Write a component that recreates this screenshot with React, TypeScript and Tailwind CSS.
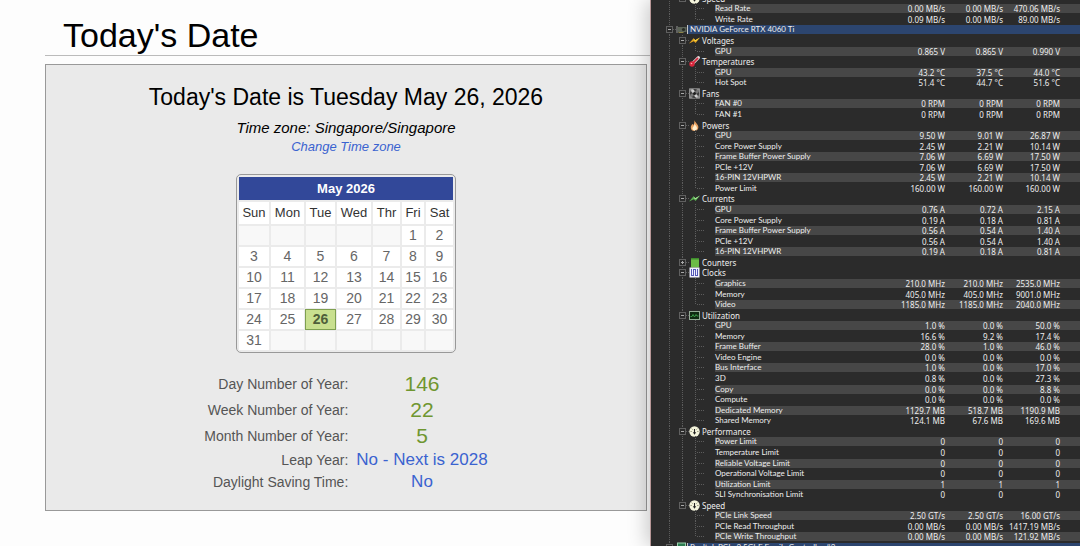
import type { ReactNode } from "react";

type Sensor = [name: string, current: string, min: string, max: string];

type Group = {
  name: string;
  icon: ReactNode;
  collapsed?: boolean;
  last?: boolean;
  sensors: Sensor[];
};

const icon = "block h-[11px] w-[11px]";

const Bolt = ({ color, shade }: { color: string; shade: string }) => (
  <svg viewBox="0 0 11 11" className={icon}>
    <path d="M0 8.6 4.6 3.2 6.2 5.2 11 2.6 6.6 8 4.8 6.2Z" fill={color} />
    <path d="M4.6 3.2 6.2 5.2 11 2.6 6.9 6.2 5.4 5.8Z" fill={shade} />
  </svg>
);

const Thermometer = () => (
  <svg viewBox="0 0 11 11" className={icon}>
    <path d="M3.4 7.6 9.4 1.6" stroke="#e8dcdc" strokeWidth="3" strokeLinecap="round" />
    <path d="M3.4 7.6 8.6 2.4" stroke="#d2283c" strokeWidth="1.7" strokeLinecap="round" />
    <circle cx="3" cy="8" r="2.7" fill="#d8263c" />
    <circle cx="2.5" cy="7.5" r="0.8" fill="#f6a9b0" />
  </svg>
);

const Fan = () => (
  <svg viewBox="0 0 11 11" className={icon}>
    <rect width="11" height="10.5" y="0.2" rx="0.6" fill="#8e8e8e" />
    <circle cx="5.5" cy="5.5" r="4.6" fill="#3c3c3c" />
    <path d="M5.5 5.5C3 5 1.2 3 2.6 1.4 5 .8 6.2 3 5.5 5.5ZM5.5 5.5C8 6 9.8 8 8.4 9.6 6 10.2 4.8 8 5.5 5.5Z" fill="#cfcfcf" />
    <path d="M5.5 5.5C6 3 8 1.2 9.6 2.6 10.2 5 8 6.2 5.5 5.5ZM5.5 5.5C5 8 3 9.8 1.4 8.4.8 6 3 4.8 5.5 5.5Z" fill="#777" />
    <circle cx="5.5" cy="5.5" r="1.5" fill="#1c1c1c" />
  </svg>
);

const Flame = () => (
  <svg viewBox="0 0 11 11" className={icon}>
    <path d="M5.2 0C5.6 2 9.4 4.2 9.4 7.2 9.4 9.6 7.6 11 5.5 11S1.8 9.6 1.8 7.4C1.8 5.8 2.8 5.2 3.2 4 4 4.4 4.2 4.8 4.2 5.2 5.2 4 5.6 2 5.2 0Z" fill="#e8a060" />
    <path d="M5.6 3.4C6 5 8 6.2 8 8 8 9.6 6.9 10.4 5.6 10.4S3.4 9.6 3.4 8.2C3.4 7 5.6 6 5.6 3.4Z" fill="#fff0d0" />
  </svg>
);

const Counter = () => (
  <svg viewBox="0 0 11 11" className={icon}>
    <rect x="2" y="1" width="8" height="9.5" fill="#6cbc48" />
    <path d="M2 1h8v1.5H2Z" fill="#3e8c2c" />
  </svg>
);

const Clock = () => (
  <svg viewBox="0 0 11 11" className={icon}>
    <rect x="0.5" y="0.5" width="10" height="10" fill="#f2f2ff" />
    <path d="M2.5 2v7M4.5 2v7M6.5 2v7M8.5 2v7" stroke="#5458b8" strokeWidth="1" />
    <path d="M4.5 2.5h2M2.500 8.500h2M6.500 8.500h2" stroke="#5458b8" strokeWidth="1" />
  </svg>
);

const Graph = () => (
  <svg viewBox="0 0 11 11" className={icon}>
    <rect x="0.5" y="1.5" width="10" height="8" fill="#0e2a12" stroke="#93ab96" />
    <path d="M1.5 6.5h1.5l1-2 1.5 2.5 1.5-2.5 1 1.5h1.5" fill="none" stroke="#3da44c" strokeWidth="0.9" />
  </svg>
);

const Gauge = () => (
  <svg viewBox="0 0 11 11" className={icon}>
    <circle cx="5.5" cy="5.5" r="5.2" fill="#f4f4dc" />
    <path d="M5.5 3v4" stroke="#222" strokeWidth="1.1" />
    <path d="M3.8 6.2h3.4L5.5 8.8Z" fill="#222" />
    <path d="M1.5 5.5h1.3M8.2 5.5h1.3M2.7 2.7l.9.9M8.3 2.7l-.9.9" stroke="#77775c" strokeWidth="0.8" />
  </svg>
);

const Card = () => (
  <svg viewBox="0 0 11 11" className={icon}>
    <path d="M1 2v7" stroke="#9a9a9a" />
    <rect x="1.5" y="3" width="9" height="5" fill="#5c6458" />
    <circle cx="7.5" cy="5.5" r="1.6" fill="#262a24" />
    <path d="M2.5 8.5h5" stroke="#8c8448" />
  </svg>
);

const Network = () => (
  <svg viewBox="0 0 11 11" className={icon}>
    <rect x="1.5" y="1" width="8" height="6" fill="#2c7c50" stroke="#9ccfae" />
    <path d="M3 9.5h5" stroke="#9ccfae" />
  </svg>
);

const groups: Group[] = [
  {
    name: "Voltages",
    icon: <Bolt color="#e0a020" shade="#ffe040" />,
    sensors: [["GPU", "0.865 V", "0.865 V", "0.990 V"]],
  },
  {
    name: "Temperatures",
    icon: <Thermometer />,
    sensors: [
      ["GPU", "43.2 °C", "37.5 °C", "44.0 °C"],
      ["Hot Spot", "51.4 °C", "44.7 °C", "51.6 °C"],
    ],
  },
  {
    name: "Fans",
    icon: <Fan />,
    sensors: [
      ["FAN #0", "0 RPM", "0 RPM", "0 RPM"],
      ["FAN #1", "0 RPM", "0 RPM", "0 RPM"],
    ],
  },
  {
    name: "Powers",
    icon: <Flame />,
    sensors: [
      ["GPU", "9.50 W", "9.01 W", "26.87 W"],
      ["Core Power Supply", "2.45 W", "2.21 W", "10.14 W"],
      ["Frame Buffer Power Supply", "7.06 W", "6.69 W", "17.50 W"],
      ["PCIe +12V", "7.06 W", "6.69 W", "17.50 W"],
      ["16-PIN 12VHPWR", "2.45 W", "2.21 W", "10.14 W"],
      ["Power Limit", "160.00 W", "160.00 W", "160.00 W"],
    ],
  },
  {
    name: "Currents",
    icon: <Bolt color="#58b050" shade="#b0e8a0" />,
    sensors: [
      ["GPU", "0.76 A", "0.72 A", "2.15 A"],
      ["Core Power Supply", "0.19 A", "0.18 A", "0.81 A"],
      ["Frame Buffer Power Supply", "0.56 A", "0.54 A", "1.40 A"],
      ["PCIe +12V", "0.56 A", "0.54 A", "1.40 A"],
      ["16-PIN 12VHPWR", "0.19 A", "0.18 A", "0.81 A"],
    ],
  },
  { name: "Counters", icon: <Counter />, collapsed: true, sensors: [] },
  {
    name: "Clocks",
    icon: <Clock />,
    sensors: [
      ["Graphics", "210.0 MHz", "210.0 MHz", "2535.0 MHz"],
      ["Memory", "405.0 MHz", "405.0 MHz", "9001.0 MHz"],
      ["Video", "1185.0 MHz", "1185.0 MHz", "2040.0 MHz"],
    ],
  },
  {
    name: "Utilization",
    icon: <Graph />,
    sensors: [
      ["GPU", "1.0 %", "0.0 %", "50.0 %"],
      ["Memory", "16.6 %", "9.2 %", "17.4 %"],
      ["Frame Buffer", "28.0 %", "1.0 %", "46.0 %"],
      ["Video Engine", "0.0 %", "0.0 %", "0.0 %"],
      ["Bus Interface", "1.0 %", "0.0 %", "17.0 %"],
      ["3D", "0.8 %", "0.0 %", "27.3 %"],
      ["Copy", "0.0 %", "0.0 %", "8.8 %"],
      ["Compute", "0.0 %", "0.0 %", "0.0 %"],
      ["Dedicated Memory", "1129.7 MB", "518.7 MB", "1190.9 MB"],
      ["Shared Memory", "124.1 MB", "67.6 MB", "169.6 MB"],
    ],
  },
  {
    name: "Performance",
    icon: <Gauge />,
    sensors: [
      ["Power Limit", "0", "0", "0"],
      ["Temperature Limit", "0", "0", "0"],
      ["Reliable Voltage Limit", "0", "0", "0"],
      ["Operational Voltage Limit", "0", "0", "0"],
      ["Utilization Limit", "1", "1", "1"],
      ["SLI Synchronisation Limit", "0", "0", "0"],
    ],
  },
  {
    name: "Speed",
    icon: <Gauge />,
    last: true,
    sensors: [
      ["PCIe Link Speed", "2.50 GT/s", "2.50 GT/s", "16.00 GT/s"],
      ["PCIe Read Throughput", "0.00 MB/s", "0.00 MB/s", "1417.19 MB/s"],
      ["PCIe Write Throughput", "0.00 MB/s", "0.00 MB/s", "121.92 MB/s"],
    ],
  },
];

const driveSpeed: Group = {
  name: "Speed",
  icon: <Gauge />,
  last: true,
  sensors: [
    ["Read Rate", "0.00 MB/s", "0.00 MB/s", "470.06 MB/s"],
    ["Write Rate", "0.09 MB/s", "0.00 MB/s", "89.00 MB/s"],
  ],
};

// One 13px step of the tree: a dotted line down, optionally with an expander box
function Guide({ line = "none", box }: { line?: "full" | "half" | "none"; box?: "+" | "-" }) {
  return (
    <svg viewBox="0 0 13 11" className="block h-[11px] w-[13px] shrink-0" shapeRendering="crispEdges">
      {line !== "none" && (
        <path
          d={line === "full" ? "M6.5 0v11" : "M6.5 0v6"}
          stroke="#5c5c5c"
          strokeDasharray="1 1"
        />
      )}
      {box && (
        <>
          <path d="M10 5.5h3" stroke="#5c5c5c" strokeDasharray="1 1" />
          <rect x="3.5" y="2.5" width="6" height="6" fill="#2b2b2b" stroke="#606060" />
          <path d={box === "+" ? "M5 5.5h3M6.5 4v3" : "M5 5.5h3"} stroke="#a8a8a8" />
        </>
      )}
    </svg>
  );
}

function Branch({ last }: { last: boolean }) {
  return (
    <svg viewBox="0 0 26 11" className="block h-[11px] w-[26px] shrink-0" shapeRendering="crispEdges">
      <path d={last ? "M6.5 0v6" : "M6.5 0v11"} stroke="#5c5c5c" strokeDasharray="1 1" />
      <path d="M8 5.5h7" stroke="#5c5c5c" strokeDasharray="1 1" />
    </svg>
  );
}

function SensorGroup({ group }: { group: Group }) {
  return (
    <>
      <tr>
        <th scope="rowgroup" colSpan={4} className="p-0 text-left font-normal">
          <div className="flex h-[9px] items-center pl-3">
            <Guide line="full" />
            <Guide line={group.last ? "half" : "full"} box={group.collapsed ? "+" : "-"} />
            {group.icon}
            <span className="pl-[2px]">{group.name}</span>
          </div>
        </th>
      </tr>
      {group.sensors.map(([name, ...values], i) => {
        const bg = i % 2 === 0 ? "bg-[#474747]" : "";
        return (
          <tr key={name}>
            <th scope="row" className="p-0 text-left font-normal">
              <div className="flex h-[9px] items-center pl-3">
                <Guide line="full" />
                <Guide line={group.last ? "none" : "full"} />
                <Branch last={i === group.sensors.length - 1} />
                <span className={`h-[9px] flex-1 font-[Lato,sans-serif] whitespace-nowrap ${bg}`}>
                  {name}
                </span>
              </div>
            </th>
            {values.map((value, col) => (
              <td key={col} className="p-0 text-right">
                <div className={`h-[9px] whitespace-nowrap ${bg} ${col === 2 ? "pr-5" : ""}`}>
                  {value}
                </div>
              </td>
            ))}
          </tr>
        );
      })}
    </>
  );
}

function DeviceRow({ name, icon }: { name: string; icon: ReactNode }) {
  return (
    <tr>
      <th scope="rowgroup" colSpan={4} className="p-0 text-left font-normal">
        <div className="flex h-[9px] items-center pl-3">
          <Guide line="full" box="-" />
          {icon}
          <span className="h-[9px] flex-1 border-l border-[#c8c8c8] bg-[#2c456f] pl-[2px] font-[Lato,sans-serif]">
            {name}
          </span>
        </div>
      </th>
    </tr>
  );
}

function SensorPanel() {
  return (
    <section className="relative h-screen overflow-hidden border-l border-[#b89898] bg-[#2b2b2b] shadow-[-4px_0_18px_rgba(0,0,0,0.2)]">
      <table className="-mt-[7px] h-[calc(100vh+14px)] w-full table-fixed border-collapse font-['Noto_Sans',sans-serif] text-[8px] leading-[9px] text-[#eee]">
        <colgroup>
          <col />
          <col className="w-[58px]" />
          <col className="w-[58px]" />
          <col className="w-[77px]" />
        </colgroup>
        <tbody>
          <SensorGroup group={driveSpeed} />
          <DeviceRow name="NVIDIA GeForce RTX 4060 Ti" icon={<Card />} />
          {groups.map((group) => (
            <SensorGroup key={group.name} group={group} />
          ))}
          <DeviceRow name="Realtek PCIe 2.5GbE Family Controller #2" icon={<Network />} />
        </tbody>
      </table>
    </section>
  );
}

const weekdays = ["Sun", "Mon", "Tue", "Wed", "Thr", "Fri", "Sat"];

const weeks = Array.from({ length: 6 }, (_, week) =>
  weekdays.map((_, day) => {
    const date = week * 7 + day - 4;
    return date >= 1 && date <= 31 ? date : null;
  })
);

function dayStyle(date: number | null) {
  if (date === 26) return "bg-[#c9e08f] font-bold text-[#4f5f3a] outline outline-[#7fa050]";
  return date ? "bg-white" : "bg-[#f8f8f8]";
}

function Calendar() {
  return (
    <table className="mx-auto mt-[18px] w-[220px] table-fixed border-separate border-spacing-[2px] rounded-[5px] border border-[#999] bg-[#ebebeb] text-center text-sm text-[#666]">
      <colgroup>
        <col className="w-[30px]" />
        <col className="w-[33px]" />
        <col className="w-[29px]" />
        <col className="w-[34px]" />
        <col className="w-[27px]" />
        <col className="w-[22px]" />
        <col className="w-[27px]" />
      </colgroup>
      <thead className="text-[13px]">
        <tr>
          <th colSpan={7} className="bg-[#324899] p-0 leading-[23px] text-white">
            May 2026
          </th>
        </tr>
        <tr>
          {weekdays.map((day) => (
            <th key={day} className="bg-white p-0 leading-[22px] font-normal text-[#333]">
              {day}
            </th>
          ))}
        </tr>
      </thead>
      <tbody>
        {weeks.map((week, i) => (
          <tr key={i}>
            {week.map((date, j) => (
              <td key={j} className={`h-[19px] p-0 leading-[19px] ${dayStyle(date)}`}>
                {date}
              </td>
            ))}
          </tr>
        ))}
      </tbody>
    </table>
  );
}

export default function App() {
  return (
    <div className="grid min-h-screen grid-cols-[65fr_43fr] overflow-hidden bg-[#fdfdfd] font-['Liberation_Sans',Arial,sans-serif] text-black">
      <main className="pl-[45px]">
        <h1 className="border-b border-[#bbb] pt-[17px] pb-[2px] pl-[18px] text-[34px] leading-9">
          Today's Date
        </h1>
        <div className="mt-2 mr-[3px] border border-[#999] bg-[#eaeaea] pb-[17px]">
          <h2 className="pt-[18px] text-center text-[23px] leading-7">
            Today's Date is Tuesday May 26, 2026
          </h2>
          <p className="mt-2 text-center text-[15px] leading-[18px] italic">
            Time zone: Singapore/Singapore
          </p>
          <p className="text-center text-[13px] leading-[19px] italic">
            <a href="#timezone" className="text-[#3a63d0]">
              Change Time zone
            </a>
          </p>
          <Calendar />
          <table className="mx-auto mt-[18px] border-collapse text-[#555]">
            <tbody className="text-center text-[21px] leading-[26px] text-[#6f9630]">
              <tr>
                <th scope="row" className="p-0 text-right text-sm leading-[26px] font-normal text-[#555]">
                  Day Number of Year:
                </th>
                <td className="p-0 pl-2">146</td>
              </tr>
              <tr>
                <th scope="row" className="p-0 text-right text-sm leading-[26px] font-normal text-[#555]">
                  Week Number of Year:
                </th>
                <td className="p-0 pl-2">22</td>
              </tr>
              <tr>
                <th scope="row" className="p-0 text-right text-sm leading-[26px] font-normal text-[#555]">
                  Month Number of Year:
                </th>
                <td className="p-0 pl-2">5</td>
              </tr>
            </tbody>
            <tbody className="text-center text-[17px] leading-[22px]">
              <tr>
                <th scope="row" className="p-0 text-right text-sm leading-[22px] font-normal">
                  Leap Year:
                </th>
                <td className="p-0 pl-2">
                  <a href="#leap-year" className="text-[#3a63d0]">
                    No - Next is 2028
                  </a>
                </td>
              </tr>
              <tr>
                <th scope="row" className="p-0 text-right text-sm leading-[22px] font-normal">
                  Daylight Saving Time:
                </th>
                <td className="p-0 pl-2">
                  <a href="#dst" className="text-[#3a63d0]">
                    No
                  </a>
                </td>
              </tr>
            </tbody>
          </table>
        </div>
      </main>
      <SensorPanel />
    </div>
  );
}
